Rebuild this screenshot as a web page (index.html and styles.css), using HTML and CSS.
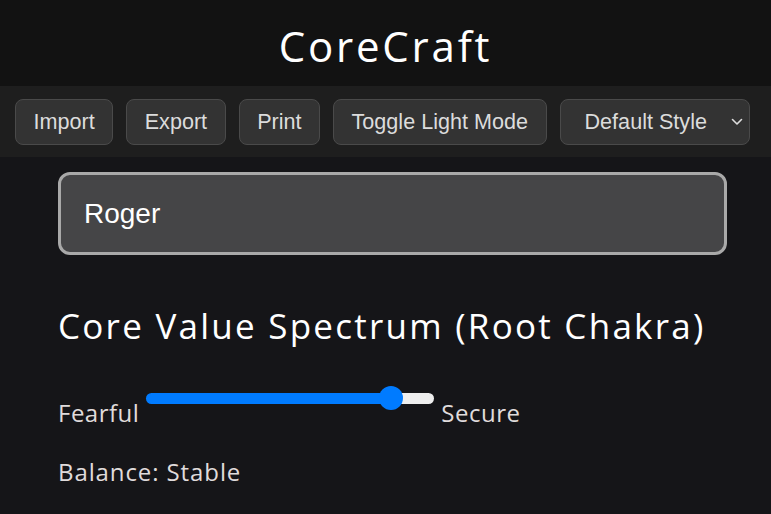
FILE: index.html
```html
<!DOCTYPE html>
<html lang="en">
<head>
<meta charset="utf-8">
<title>CoreCraft</title>
<link rel="stylesheet" href="styles.css">
</head>
<body>
<header class="site-header">
  <h1 class="brand">CoreCraft</h1>
</header>
<nav class="toolbar">
  <button class="btn">Import</button>
  <button class="btn">Export</button>
  <button class="btn">Print</button>
  <button class="btn">Toggle Light Mode</button>
  <div class="select-wrap">
    <select class="style-select">
      <option>Default Style</option>
    </select>
    <svg class="chevron" width="12" height="8" viewBox="0 0 12 8"><path d="M1.5 1.5 L6 6 L10.5 1.5" fill="none" stroke="#ddd" stroke-width="1.6" stroke-linecap="round" stroke-linejoin="round"/></svg>
  </div>
</nav>
<main class="content">
  <input class="name-input" type="text" value="Roger">
  <h2 class="section-title">Core Value Spectrum (Root Chakra)</h2>
  <div class="spectrum">
    <span class="end-label">Fearful</span>
    <input class="range" type="range" min="0" max="100" value="88">
    <span class="end-label">Secure</span>
  </div>
  <p class="balance">Balance: Stable</p>
</main>
</body>
</html>
```
FILE: styles.css
```css
* { box-sizing: border-box; }
html, body {
  margin: 0;
  padding: 0;
  background: #151518;
  color: #e0dcdc;
  font-family: "Open Sans", "Noto Sans", sans-serif;
}
.site-header {
  background: #121212;
  height: 86px;
  display: flex;
  align-items: center;
  justify-content: center;
}
.brand {
  margin: 0;
  font-weight: 400;
  font-size: 42px;
  color: #fff;
  letter-spacing: 2.8px;
  padding-top: 4px;
}
.toolbar {
  background: #1e1e1e;
  height: 71px;
  display: flex;
  align-items: center;
  gap: 13px;
  padding: 0 15px;
}
.btn, .style-select {
  font-family: "Liberation Sans", Arial, sans-serif;
  font-size: 21.6px;
  color: #dcdcdc;
  background: #333;
  border: 1px solid #4a4a4a;
  border-radius: 8px;
  height: 46px;
  padding: 0 17.5px;
  margin: 0;
}
.select-wrap {
  position: relative;
}
.style-select {
  -webkit-appearance: none;
  appearance: none;
  width: 190px;
  padding: 0 0 0 24px;
}
.chevron {
  position: absolute;
  right: 7px;
  top: 19px;
}
.content {
  padding: 15px 44px 0 58px;
}
.name-input {
  display: block;
  width: 669px;
  height: 83px;
  background: #454547;
  border: 3px solid #a9a9a9;
  border-radius: 12px;
  color: #fff;
  font-family: "Liberation Sans", Arial, sans-serif;
  font-size: 28px;
  padding: 0 23px;
  margin: 0;
}
.section-title {
  margin: 51px 0 0;
  font-weight: 400;
  font-size: 35px;
  letter-spacing: 2.25px;
  color: #fff;
  line-height: 40px;
}
.spectrum {
  display: flex;
  align-items: flex-start;
  gap: 7px;
  margin-top: 40px;
}
.end-label {
  font-size: 24px;
  letter-spacing: 0.5px;
  line-height: 30px;
  padding-top: 12px;
}
.range {
  -webkit-appearance: none;
  appearance: none;
  width: 288px;
  height: 24px;
  margin: 0;
  background: transparent;
}
.range::-webkit-slider-runnable-track {
  height: 11px;
  border-radius: 6px;
  background: linear-gradient(to right, #007bff 0, #007bff 84%, #eeeeee 84%);
}
.range::-webkit-slider-thumb {
  -webkit-appearance: none;
  width: 24px;
  height: 24px;
  border-radius: 50%;
  background: #007bff;
  border: none;
  margin-top: -6.5px;
}
.balance {
  margin: 29px 0 0;
  font-size: 24px;
  letter-spacing: 0.9px;
  line-height: 30px;
}
```
